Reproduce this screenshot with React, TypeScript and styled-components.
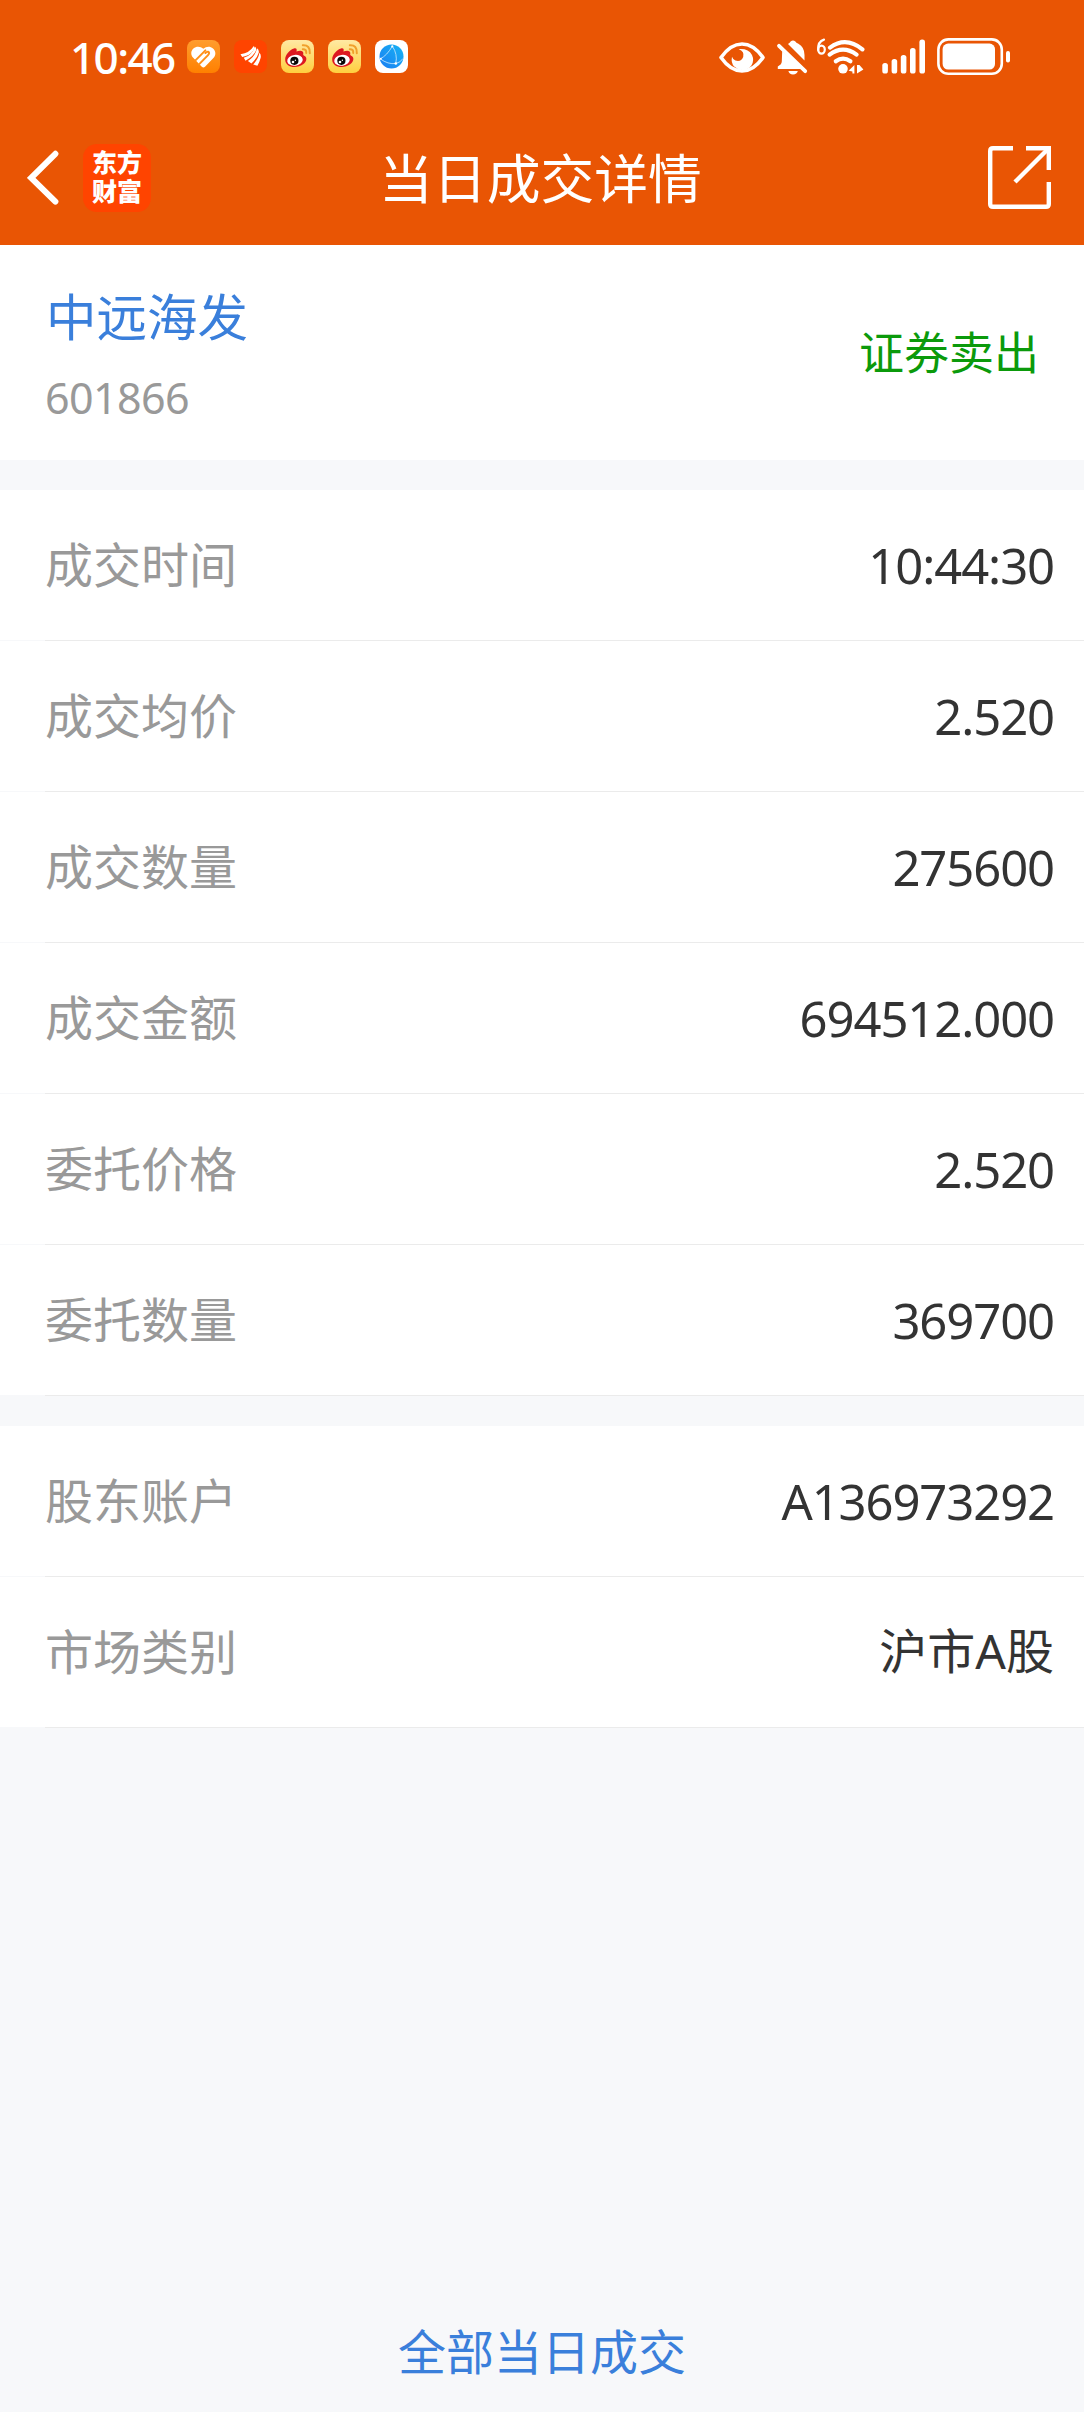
import React from "react";
import styled, { createGlobalStyle } from "styled-components";

const GlobalStyle = createGlobalStyle`
  * { box-sizing: border-box; }
  html, body { margin: 0; padding: 0; background: #f7f8fa; }
  body { font-family: "Noto Sans", "Noto Sans CJK SC", sans-serif; }
`;

const Screen = styled.div`
  width: 1084px;
  height: 2412px;
  display: flex;
  flex-direction: column;
  background: #f7f8fa;
  overflow: hidden;
`;

const Header = styled.header`
  height: 245px;
  flex: none;
  background: #e95504;
  color: #fff;
`;

const StatusBar = styled.div`
  height: 110px;
  padding: 3px 74px 0 70px;
  display: flex;
  align-items: center;
  justify-content: space-between;
`;

const StatusGroup = styled.div<{ $gap: number }>`
  display: flex;
  align-items: center;
  gap: ${(p) => p.$gap}px;
`;

const Clock = styled.span`
  width: 103px;
  font-size: 44px;
  font-weight: 500;
  line-height: 60px;
  letter-spacing: -1.6px;
  white-space: nowrap;
`;

const AppIcon = styled.svg`
  width: 33px;
  height: 33px;
  display: block;
`;

const NavBar = styled.nav`
  height: 135px;
  padding: 0 33px 0 27px;
  display: grid;
  grid-template-columns: 1fr auto 1fr;
  align-items: center;
`;

const NavLeft = styled.div`
  display: flex;
  align-items: center;
  gap: 24px;
`;

const Brand = styled.div`
  width: 68px;
  height: 68px;
  padding-left: 9px;
  display: flex;
  flex-direction: column;
  justify-content: center;
  border-radius: 14px;
  background: #ff4400;
`;

const BrandLine = styled.span`
  padding-top: 0;
  font-family: "Liberation Sans", "Noto Sans CJK SC", sans-serif;
  font-weight: 800;
  font-size: 25px;
  line-height: 29px;
`;

const Title = styled.h1`
  margin: 0;
  font-family: "Noto Sans CJK SC", sans-serif;
  font-size: 53.8px;
  font-weight: 400;
  line-height: 76px;
  padding: 0 0 4px 3px;
`;

const NavRight = styled.div`
  display: flex;
  justify-content: flex-end;
`;

const StockPanel = styled.section`
  height: 215px;
  flex: none;
  padding: 0 45px 0 45px;
  display: flex;
  justify-content: space-between;
  align-items: center;
  background: #fff;
`;

const StockInfo = styled.div`
  display: flex;
  flex-direction: column;
`;

const StockName = styled.div`
  padding-left: 1px;
  font-family: "Noto Sans CJK SC", sans-serif;
  font-size: 50.5px;
  line-height: 72px;
  color: #3a7fdb;
`;

const StockCode = styled.div`
  margin-top: 18px;
  font-size: 43px;
  line-height: 60px;
  letter-spacing: -0.6px;
  color: #999;
`;

const Side = styled.div`
  font-family: "Noto Sans CJK SC", sans-serif;
  font-size: 45px;
  line-height: 66px;
  padding-bottom: 3px;
  color: #0b9a0b;
`;

const Group = styled.section`
  margin-top: 30px;
  flex: none;
`;

const Row = styled.div`
  height: 150px;
  padding: 0 30px 0 45px;
  display: flex;
  align-items: center;
  justify-content: space-between;
  background: #fff;
`;

const Divider = styled.div`
  height: 1px;
  margin-left: 45px;
  background: #ebebeb;
`;

const Label = styled.span`
  font-family: "Noto Sans CJK SC", sans-serif;
  font-size: 48px;
  line-height: 70px;
  padding-bottom: 7px;
  color: #999;
`;

const Value = styled.span<{ $cjk?: boolean }>`
  font-size: ${(p) => (p.$cjk ? 48 : 49)}px;
  line-height: 70px;
  padding-bottom: ${(p) => (p.$cjk ? 3 : 1)}px;
  letter-spacing: ${(p) => (p.$cjk ? 0 : -1.1)}px;
  color: #333;
`;

const Footer = styled.footer`
  margin-top: auto;
  height: 122px;
  display: flex;
  justify-content: center;
  align-items: center;
`;

const AllTrades = styled.a`
  font-family: "Noto Sans CJK SC", sans-serif;
  font-size: 48px;
  line-height: 70px;
  padding-bottom: 5px;
  color: #3a7fdb;
`;

function HealthIcon() {
  return (
    <AppIcon viewBox="0 0 33 33">
      <defs>
        <linearGradient id="health" x1="0" y1="0" x2="0" y2="1">
          <stop offset="0" stopColor="#ff9d2e" />
          <stop offset="1" stopColor="#ff8000" />
        </linearGradient>
      </defs>
      <rect width="33" height="33" rx="8" fill="url(#health)" />
      <path
        d="M16.4 8.8 C19 6.4 23 6 26 8.4 C29 11.2 29.2 15 26.4 18 L18 26.8 Q16.4 28.4 14.8 26.8 L6.2 17.8 C3.6 14.8 3.6 11 6.4 8.4 C9.4 6 13.6 6.2 16.4 8.8 Z"
        fill="#fff"
      />
      <g stroke="#ff9018" strokeWidth="2" fill="none" strokeLinecap="round">
        <path d="M8.2 20.6 L18.4 10.4" />
        <path d="M12 24.4 L20.8 15.4 Q23.2 12.6 21.2 11.8 Q20 11.4 18.4 13" />
      </g>
    </AppIcon>
  );
}

function EastMoneyIcon() {
  return (
    <AppIcon viewBox="0 0 33 33">
      <rect width="33" height="33" rx="8" fill="#ff4400" />
      <g fill="#fff">
        <path d="M6.5 14.3 Q15.5 13 19.8 6 Q20.8 7.6 19.5 10.3 Q16 15.8 8.2 17 Z" />
        <path d="M20.8 6.4 Q22.6 7.4 22 10.5 Q19.6 16.4 11.5 20.7 L9.8 17.8 Q18 15.5 20.8 6.4 Z" />
        <path d="M23 8.2 Q25.2 9.6 24.8 12.5 Q23.3 17.8 17.4 23.4 L13.9 21 Q21.6 16 23 8.2 Z" />
        <path d="M25.4 12.8 Q27.4 14.5 26.6 18 Q25.6 22 23.4 25.8 L19.2 24.4 Q24.4 19 25.4 12.8 Z" />
      </g>
    </AppIcon>
  );
}

function WeiboIcon({ id }: { id: string }) {
  return (
    <AppIcon viewBox="0 0 33 33">
      <defs>
        <linearGradient id={id} x1="0" y1="0" x2="0" y2="1">
          <stop offset="0" stopColor="#ffe9a3" />
          <stop offset="1" stopColor="#ffcf3f" />
        </linearGradient>
      </defs>
      <rect width="33" height="33" rx="8" fill={`url(#${id})`} />
      <path
        d="M4.2 19.5 C4 15 9 9.3 13 8.4 C16 7.8 16 10 15.4 11.6 C18.5 10.2 22.6 10 22.3 13.6 C22.2 14.8 21.9 15 22.8 15.5 C26.6 16.8 26 21.5 22.5 24 C18 27.6 10.5 28 6.8 25 C5 23.6 4.2 21.8 4.2 19.5 Z"
        fill="#dd1820"
      />
      <ellipse cx="14" cy="20.3" rx="7.8" ry="5.4" fill="#fff" transform="rotate(-8 14 20.3)" />
      <circle cx="13.4" cy="20.8" r="4.1" fill="#080808" />
      <circle cx="12" cy="22" r="1.3" fill="#fff" />
      <circle cx="14.4" cy="20.2" r="0.7" fill="#fff" />
      <g fill="none" stroke="#f0a02c" strokeWidth="2" strokeLinecap="round">
        <path d="M21.8 5.3 Q29.2 4.8 28.8 13.2" />
        <path d="M21.8 9.2 Q25.6 9 25.2 12.9" />
      </g>
    </AppIcon>
  );
}

function BrowserIcon() {
  return (
    <AppIcon viewBox="0 0 33 33">
      <defs>
        <linearGradient id="globe" x1="1" y1="0" x2="0" y2="1">
          <stop offset="0" stopColor="#16b4f4" />
          <stop offset="1" stopColor="#1b7df2" />
        </linearGradient>
      </defs>
      <rect width="33" height="33" rx="8" fill="#fff" />
      <circle cx="16.5" cy="16.5" r="12" fill="url(#globe)" />
      <g fill="none" stroke="#b9e2ff" strokeWidth="0.9">
        <path d="M5.2 18.8 Q12 15.6 17.3 6.2" />
        <path d="M17.3 6.2 Q22.8 14 20.8 23.5" />
        <path d="M5.2 18.8 Q13 24.6 20.8 23.5 Q25.4 22.6 28 18.5" />
      </g>
      <g fill="#fff">
        <circle cx="17.3" cy="6.4" r="1.1" />
        <circle cx="5.8" cy="18.8" r="1" />
        <circle cx="20.8" cy="23.5" r="1.3" />
      </g>
    </AppIcon>
  );
}

/* Eye comfort, muted bell, Wi-Fi 6, signal strength and battery, left to right. */
function SystemIcons() {
  return (
    <svg width="292" height="40" viewBox="718 36 292 40" fill="none">
      <path
        d="M721 56.5 Q730.5 43 742 43 Q753.5 43 763 56.5 Q753.5 70 742 70 Q730.5 70 721 56.5 Z"
        stroke="#fff"
        strokeWidth="3.6"
        strokeLinejoin="round"
      />
      <path
        d="M738.6 48.2 Q744.8 50.4 743.2 56 Q741 61.4 735.4 59.6 Q732.8 58.4 732 55.8 Q730.8 62 734.2 65.6 Q738 69.2 742.5 69 Q748 69 751.4 64.6 Q754.6 59.6 752 54 Q748.4 47.4 738.6 48.2 Z"
        fill="#fff"
      />
      <path d="M788 43 Q790 42 790.6 40.6 Q793 38.4 795.4 40.6 Q796 42 798.4 42.8 Q804.5 46.2 804.5 54 L804.5 59.6 Z" fill="#fff" />
      <path d="M782.2 50 L801.6 68 L777.8 68 L777.8 65.4 L780.6 63.4 Q781.8 62.4 781.8 60.6 Z" fill="#fff" />
      <path d="M779 44.8 L805.2 70.2" stroke="#fff" strokeWidth="3.8" strokeLinecap="round" />
      <path d="M788.4 70 H797.8 Q797 73.4 793 73.4 Q789.2 73.4 788.4 70 Z" fill="#fff" />
      <ellipse cx="821.5" cy="48.6" rx="3.3" ry="4" stroke="#fff" strokeWidth="2.2" />
      <path d="M824 38.6 Q817.6 40.6 818.2 49" stroke="#fff" strokeWidth="2.2" strokeLinecap="round" />
      <g stroke="#fff" strokeWidth="4.2" strokeLinecap="round">
        <path d="M830 46.6 Q846 35 862.4 48.4" />
        <path d="M829.6 53.6 Q843 43.6 856.6 53.6" />
        <path d="M835.8 60.2 Q843 55 850.4 60.2" />
      </g>
      <circle cx="843" cy="67.8" r="4.8" fill="#fff" />
      <path d="M854.4 64 V72.6 H852.4 V70.4 L848.6 69.8 Z M857 64 H859.4 L863.4 68.4 L857 72.6 Z" fill="#fff" />
      <g fill="#fff">
        <rect x="882.3" y="62" width="5.6" height="10.5" rx="2.6" />
        <rect x="891.6" y="58" width="5.6" height="14.5" rx="2.6" />
        <rect x="900.8" y="54" width="5.6" height="18.5" rx="2.6" />
        <rect x="910" y="47" width="5.6" height="25.5" rx="2.6" />
        <rect x="919.4" y="38.6" width="5.6" height="33.9" rx="2.6" />
        <rect x="942.6" y="42.6" width="52.4" height="26" rx="5.5" />
        <rect x="1006" y="50" width="4" height="11.4" rx="1.9" />
      </g>
      <rect x="938.4" y="38.4" width="63.4" height="34.4" rx="10" stroke="#fff" strokeWidth="2.6" />
    </svg>
  );
}

function BackIcon() {
  return (
    <svg width="32" height="56" viewBox="0 0 32 56" fill="none">
      <path d="M28.4 3.8 L4.2 27.8 L28.4 51.6" stroke="#fff" strokeWidth="6" strokeLinecap="round" />
    </svg>
  );
}

function ShareIcon() {
  return (
    <svg width="63" height="63" viewBox="0 0 63 63" fill="none" stroke="#fff" strokeWidth="4.4">
      <path d="M25 2.2 H5 Q2.2 2.2 2.2 5 V58 Q2.2 60.8 5 60.8 H58 Q60.8 60.8 60.8 58 V36" />
      <path d="M38 2.2 H60.8 V24" />
      <path d="M60 3 L27 36" />
    </svg>
  );
}

const tradeRows = [
  { label: "成交时间", value: "10:44:30" },
  { label: "成交均价", value: "2.520" },
  { label: "成交数量", value: "275600" },
  { label: "成交金额", value: "694512.000" },
  { label: "委托价格", value: "2.520" },
  { label: "委托数量", value: "369700" },
];

const accountRows = [
  { label: "股东账户", value: "A136973292" },
  { label: "市场类别", value: "沪市A股", cjk: true },
];

function DetailGroup({ rows }: { rows: { label: string; value: string; cjk?: boolean }[] }) {
  return (
    <Group>
      {rows.map((row) => (
        <React.Fragment key={row.label}>
          <Row>
            <Label>{row.label}</Label>
            <Value $cjk={row.cjk}>{row.value}</Value>
          </Row>
          <Divider />
        </React.Fragment>
      ))}
    </Group>
  );
}

export default function App() {
  return (
    <Screen>
      <GlobalStyle />
      <Header>
        <StatusBar>
          <StatusGroup $gap={14}>
            <Clock>10:46</Clock>
            <HealthIcon />
            <EastMoneyIcon />
            <WeiboIcon id="weibo-a" />
            <WeiboIcon id="weibo-b" />
            <BrowserIcon />
          </StatusGroup>
          <SystemIcons />
        </StatusBar>
        <NavBar>
          <NavLeft>
            <BackIcon />
            <Brand>
              <BrandLine>东方</BrandLine>
              <BrandLine>财富</BrandLine>
            </Brand>
          </NavLeft>
          <Title>当日成交详情</Title>
          <NavRight>
            <ShareIcon />
          </NavRight>
        </NavBar>
      </Header>
      <StockPanel>
        <StockInfo>
          <StockName>中远海发</StockName>
          <StockCode>601866</StockCode>
        </StockInfo>
        <Side>证券卖出</Side>
      </StockPanel>
      <DetailGroup rows={tradeRows} />
      <DetailGroup rows={accountRows} />
      <Footer>
        <AllTrades>全部当日成交</AllTrades>
      </Footer>
    </Screen>
  );
}
